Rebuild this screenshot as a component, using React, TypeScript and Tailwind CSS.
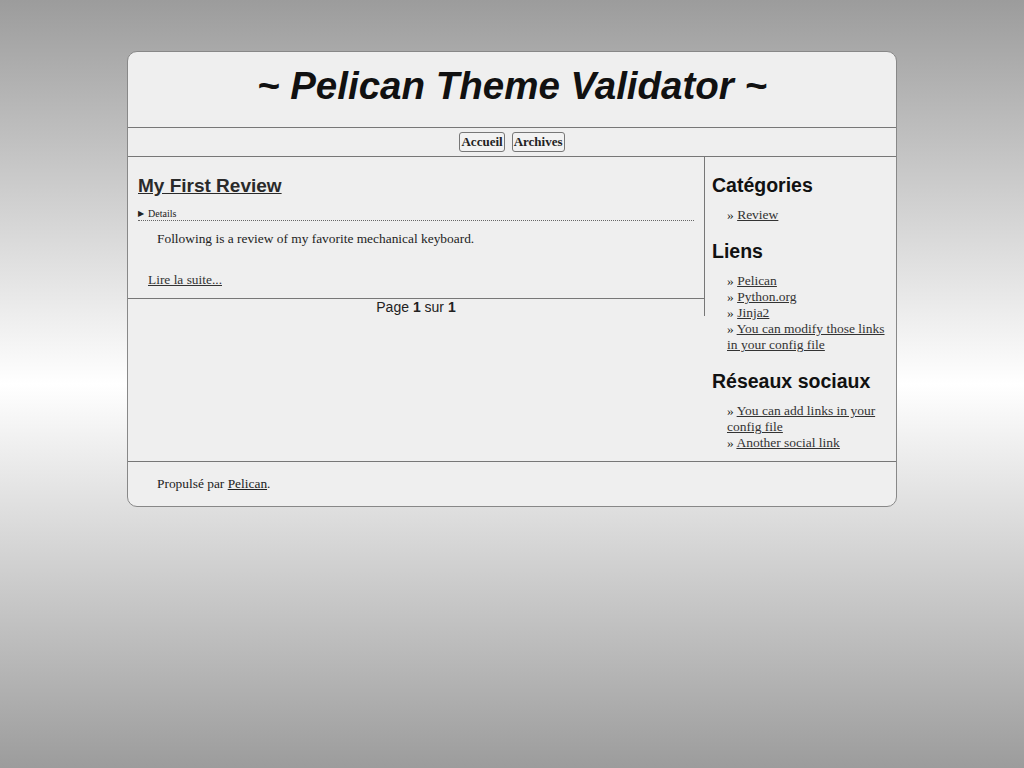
import React from "react";

const serif = "font-['Liberation_Serif','Times_New_Roman',serif]";
const sans = "font-['Liberation_Sans',Arial,sans-serif]";

function Side({ title, children }: { title: string; children: React.ReactNode }) {
  return (
    <div className="mb-[18px] last:mb-[10px]">
      <h2 className={`${sans} text-[19.5px] font-bold text-[#111] leading-[21px] mb-[11px]`}>{title}</h2>
      <ul className={`${serif} text-[13.5px] leading-[16px] text-[#222] pl-[15px]`}>{children}</ul>
    </div>
  );
}

function Li({ children }: { children: React.ReactNode }) {
  return (
    <li>
      » <a className="underline text-[#333]">{children}</a>
    </li>
  );
}

export default function App() {
  return (
    <div className="min-h-[768px] w-full bg-[linear-gradient(to_bottom,#9c9c9c_0%,#ffffff_50%,#9c9c9c_100%)] pt-[51px]">
      <div className="mx-auto w-[770px] bg-[#efefef] border border-[#888] rounded-[10px] overflow-hidden">
        <header className="h-[76px] border-b border-[#777] flex items-center justify-center">
          <h1 className={`${sans} italic font-bold text-[38.5px] text-[#111] leading-none mb-[6px]`}>
            ~ Pelican Theme Validator ~
          </h1>
        </header>
        <nav className="h-[29px] border-b border-[#777] flex items-center justify-center gap-[7px]">
          <a className={`${serif} font-bold text-[13px] text-[#222] border border-[#777] rounded-[3px] px-[1px] h-[20px] leading-[18px] bg-[#f2f2f2]`}>Accueil</a>
          <a className={`${serif} font-bold text-[13px] text-[#222] border border-[#777] rounded-[3px] px-[1px] h-[20px] leading-[18px] bg-[#f2f2f2]`}>Archives</a>
        </nav>
        <div className="flex items-start">
          <div className="w-[577px] border-r border-[#777]">
            <article className="px-[10px] pt-[18px] pb-[10px]">
              <h2 className={`${sans} text-[19px] font-bold text-[#2a2a2a] underline leading-[22px]`}>My First Review</h2>
              <div className={`${serif} mt-[11px] border-b border-dotted border-[#666] text-[10px] leading-[12px] text-[#222] flex items-center`}>
                <span className="text-[8px] mr-[4px]">▶</span>Details
              </div>
              <p className={`${serif} text-[13.4px] leading-[16px] text-[#222] pl-[19px] mt-[10px]`}>
                Following is a review of my favorite mechanical keyboard.
              </p>
              <a className={`${serif} block text-[13.4px] leading-[16px] text-[#333] underline pl-[10px] mt-[25px]`}>Lire la suite...</a>
            </article>
            <div className={`${sans} border-t border-[#777] text-center text-[14px] leading-[17px] text-[#222] h-[18px]`}>
              Page <b>1</b> sur <b>1</b>
            </div>
          </div>
          <aside className="flex-1 pl-[7px] pt-[18px]">
            <Side title="Catégories">
              <Li>Review</Li>
            </Side>
            <Side title="Liens">
              <Li>Pelican</Li>
              <Li>Python.org</Li>
              <Li>Jinja2</Li>
              <Li>You can modify those links in your config file</Li>
            </Side>
            <Side title="Réseaux sociaux">
              <Li>You can add links in your config file</Li>
              <Li>Another social link</Li>
            </Side>
          </aside>
        </div>
        <footer className={`${serif} border-t border-[#777] h-[45px] pl-[29px] pt-[14px] text-[13.4px] leading-[16px] text-[#222]`}>
          Propulsé par <a className="underline">Pelican</a>.
        </footer>
      </div>
    </div>
  );
}
